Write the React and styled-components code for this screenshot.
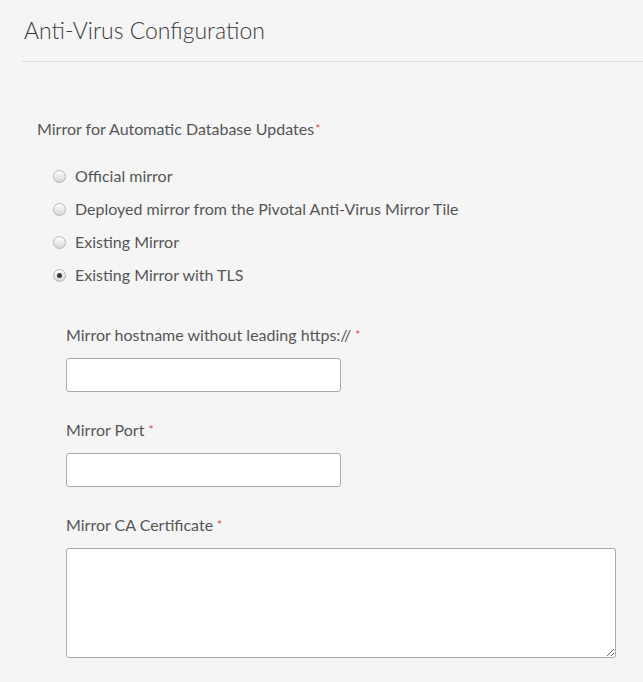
import React, { useState } from "react";
import styled, { createGlobalStyle } from "styled-components";

const GlobalStyle = createGlobalStyle`
  html, body {
    margin: 0;
    padding: 0;
    background: #f5f5f5;
  }
  body {
    font-family: Lato, "Open Sans", sans-serif;
    color: #4a4a4a;
  }
`;

const Page = styled.div`
  width: 643px;
  min-height: 682px;
  background: #f5f5f5;
`;

const Header = styled.div`
  margin-left: 22px;
  padding: 15px 0 16px 2px;
  border-bottom: 1px solid #dcdcdc;
`;

const Title = styled.h1`
  margin: 0;
  font-size: 23px;
  line-height: 30px;
  font-weight: 300;
  color: #3a3a3a;
`;

const Form = styled.form`
  padding: 57px 0 0 37px;
`;

const Label = styled.div`
  font-size: 16px;
  line-height: 20px;
  color: #555;
`;

const Star = styled.span`
  color: #e5413d;
  font-size: 12px;
  vertical-align: top;
  margin-left: ${(p) => (p.$gap ? "4px" : "1px")};
`;

const RadioList = styled.div`
  display: flex;
  flex-direction: column;
  gap: 13px;
  padding: 27px 0 0 16px;
`;

const RadioRow = styled.label`
  display: flex;
  align-items: center;
  gap: 9px;
  font-size: 16px;
  line-height: 20px;
  color: #555;
  cursor: pointer;
`;

const RadioDot = styled.span`
  width: 11px;
  height: 11px;
  border-radius: 50%;
  border: 1px solid #b5b5b5;
  background: linear-gradient(#ffffff, #d6d6d6);
  display: flex;
  align-items: center;
  justify-content: center;
  flex-shrink: 0;
  &::after {
    content: "";
    width: 5px;
    height: 5px;
    border-radius: 50%;
    background: ${(p) => (p.$on ? "#3a3a3a" : "transparent")};
  }
`;

const Nested = styled.div`
  padding: 40px 0 0 29px;
  display: flex;
  flex-direction: column;
  gap: 28px;
`;

const Field = styled.div`
  display: flex;
  flex-direction: column;
  gap: 13px;
`;

const Input = styled.input`
  box-sizing: border-box;
  width: 275px;
  height: 34px;
  border: 1px solid #a9a9a9;
  border-radius: 3px;
  background: #fff;
  font: inherit;
  padding: 0 8px;
  outline: none;
`;

const TextArea = styled.textarea`
  box-sizing: border-box;
  width: 550px;
  height: 110px;
  border: 1px solid #a9a9a9;
  border-radius: 3px;
  background: #fff;
  font: inherit;
  padding: 6px 8px;
  outline: none;
  resize: both;
  display: block;
`;

const options = [
  "Official mirror",
  "Deployed mirror from the Pivotal Anti-Virus Mirror Tile",
  "Existing Mirror",
  "Existing Mirror with TLS",
];

export default function App() {
  const [choice, setChoice] = useState(3);

  return (
    <Page>
      <GlobalStyle />
      <Header>
        <Title>Anti-Virus Configuration</Title>
      </Header>
      <Form onSubmit={(e) => e.preventDefault()}>
        <Label>
          Mirror for Automatic Database Updates<Star>*</Star>
        </Label>
        <RadioList>
          {options.map((opt, i) => (
            <RadioRow key={opt} onClick={() => setChoice(i)}>
              <RadioDot $on={choice === i} />
              {opt}
            </RadioRow>
          ))}
        </RadioList>
        <Nested>
          <Field>
            <Label>
              Mirror hostname without leading https://<Star $gap>*</Star>
            </Label>
            <Input type="text" />
          </Field>
          <Field>
            <Label>
              Mirror Port<Star $gap>*</Star>
            </Label>
            <Input type="text" />
          </Field>
          <Field>
            <Label>
              Mirror CA Certificate<Star $gap>*</Star>
            </Label>
            <TextArea />
          </Field>
        </Nested>
      </Form>
    </Page>
  );
}
